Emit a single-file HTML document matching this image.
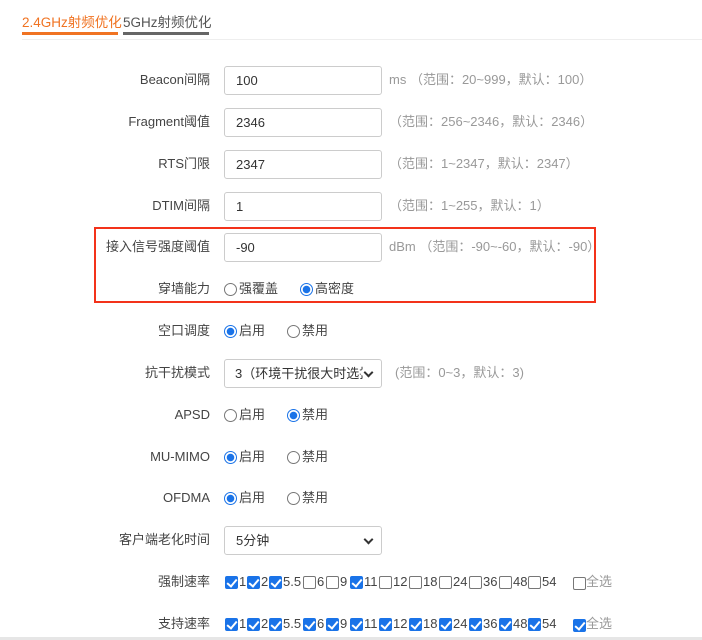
<!DOCTYPE html>
<html><head><meta charset="utf-8"><style>
*{box-sizing:border-box;margin:0;padding:0}
body{width:702px;height:640px;background:#fff;position:relative;overflow:hidden;font-family:"Liberation Sans","Noto Sans CJK SC",sans-serif;font-size:13px;color:#444}
.a{position:absolute;white-space:nowrap}
.lab{position:absolute;right:492px;white-space:nowrap;color:#444;line-height:16px}
.inp{position:absolute;left:224px;width:158px;height:29px;border:1px solid #ccc;border-radius:3px;padding-left:11px;line-height:27px;color:#333;overflow:hidden;white-space:nowrap}
.hint{position:absolute;color:#999;white-space:nowrap;line-height:16px}
.r{position:absolute;width:13px;height:13px;border:1px solid #777;border-radius:50%;background:#fff}
.r.on{border:1px solid #1a73e8;background:radial-gradient(circle,#1a73e8 0 3.5px,#fff 4px)}
.rt{position:absolute;line-height:16px}
.cb{position:absolute;width:13px;height:13px;border:1px solid #777;border-radius:2px;background:#fff}
.cb.on{background:#1a73e8;border-color:#1a73e8}
.cb.on::after{content:"";position:absolute;left:3px;top:0px;width:4px;height:8px;border:solid #fff;border-width:0 2px 2px 0;transform:rotate(40deg)}
.n{position:absolute;line-height:16px}
.sel{padding-right:22px}
.sel::after{content:"";position:absolute;right:9px;top:9px;width:5px;height:5px;border:solid #333;border-width:0 2px 2px 0;transform:rotate(45deg);background:#fff;box-shadow:0 0 0 3px #fff}
</style></head><body>
<div class="a" style="left:22px;top:14px;color:#f07322;font-size:13.5px;line-height:18px">2.4GHz射频优化</div>
<div class="a" style="left:22px;top:32px;width:96px;height:3px;background:#f07322"></div>
<div class="a" style="left:123px;top:14px;color:#555;font-size:13.5px;line-height:18px">5GHz射频优化</div>
<div class="a" style="left:123px;top:32px;width:86px;height:3px;background:#666"></div>
<div class="a" style="left:22px;top:39px;width:680px;height:1px;background:#eee"></div>

<div class="lab" style="top:72px">Beacon间隔</div><div class="inp" style="top:66px">100</div><div class="hint" style="left:389px;top:72px">ms （范围：20~999，默认：100）</div>
<div class="lab" style="top:114px">Fragment阈值</div><div class="inp" style="top:108px">2346</div><div class="hint" style="left:389px;top:114px">（范围：256~2346，默认：2346）</div>
<div class="lab" style="top:156px">RTS门限</div><div class="inp" style="top:150px">2347</div><div class="hint" style="left:389px;top:156px">（范围：1~2347，默认：2347）</div>
<div class="lab" style="top:198px">DTIM间隔</div><div class="inp" style="top:192px">1</div><div class="hint" style="left:389px;top:198px">（范围：1~255，默认：1）</div>

<div class="a" style="left:94px;top:227px;width:502px;height:76px;border:2px solid #f3321a"></div>
<div class="lab" style="top:239px">接入信号强度阈值</div><div class="inp" style="top:233px">-90</div><div class="hint" style="left:389px;top:239px">dBm （范围：-90~-60，默认：-90）</div>
<div class="lab" style="top:281px">穿墙能力</div><div class="r" style="left:224px;top:283px"></div><div class="rt" style="left:239px;top:281px">强覆盖</div><div class="r on" style="left:300px;top:283px"></div><div class="rt" style="left:315px;top:281px">高密度</div>

<div class="lab" style="top:323px">空口调度</div><div class="r on" style="left:224px;top:325px"></div><div class="rt" style="left:239px;top:323px">启用</div><div class="r" style="left:287px;top:325px"></div><div class="rt" style="left:302px;top:323px">禁用</div>

<div class="lab" style="top:365px">抗干扰模式</div><div class="inp sel" style="top:359px;padding-left:10px">3（环境干扰很大时选择</div><div class="hint" style="left:395px;top:365px">(范围：0~3，默认：3)</div>

<div class="lab" style="top:407px">APSD</div><div class="r" style="left:224px;top:409px"></div><div class="rt" style="left:239px;top:407px">启用</div><div class="r on" style="left:287px;top:409px"></div><div class="rt" style="left:302px;top:407px">禁用</div>
<div class="lab" style="top:449px">MU-MIMO</div><div class="r on" style="left:224px;top:451px"></div><div class="rt" style="left:239px;top:449px">启用</div><div class="r" style="left:287px;top:451px"></div><div class="rt" style="left:302px;top:449px">禁用</div>
<div class="lab" style="top:490px">OFDMA</div><div class="r on" style="left:224px;top:492px"></div><div class="rt" style="left:239px;top:490px">启用</div><div class="r" style="left:287px;top:492px"></div><div class="rt" style="left:302px;top:490px">禁用</div>

<div class="lab" style="top:532px">客户端老化时间</div><div class="inp sel" style="top:526px">5分钟</div>

<div class="lab" style="top:574px">强制速率</div>
<div class="lab" style="top:616px">支持速率</div>

<div class="cb on" style="left:225px;top:576px"></div><div class="n" style="left:239px;top:574px">1</div>
<div class="cb on" style="left:247px;top:576px"></div><div class="n" style="left:261px;top:574px">2</div>
<div class="cb on" style="left:269px;top:576px"></div><div class="n" style="left:283px;top:574px">5.5</div>
<div class="cb" style="left:303px;top:576px"></div><div class="n" style="left:317px;top:574px">6</div>
<div class="cb" style="left:326px;top:576px"></div><div class="n" style="left:340px;top:574px">9</div>
<div class="cb on" style="left:350px;top:576px"></div><div class="n" style="left:364px;top:574px">11</div>
<div class="cb" style="left:379px;top:576px"></div><div class="n" style="left:393px;top:574px">12</div>
<div class="cb" style="left:409px;top:576px"></div><div class="n" style="left:423px;top:574px">18</div>
<div class="cb" style="left:439px;top:576px"></div><div class="n" style="left:453px;top:574px">24</div>
<div class="cb" style="left:469px;top:576px"></div><div class="n" style="left:483px;top:574px">36</div>
<div class="cb" style="left:499px;top:576px"></div><div class="n" style="left:513px;top:574px">48</div>
<div class="cb" style="left:528px;top:576px"></div><div class="n" style="left:542px;top:574px">54</div>
<div class="cb" style="left:573px;top:577px"></div><div class="n" style="left:586px;top:574px;color:#999">全选</div>

<div class="cb on" style="left:225px;top:618px"></div><div class="n" style="left:239px;top:616px">1</div>
<div class="cb on" style="left:247px;top:618px"></div><div class="n" style="left:261px;top:616px">2</div>
<div class="cb on" style="left:269px;top:618px"></div><div class="n" style="left:283px;top:616px">5.5</div>
<div class="cb on" style="left:303px;top:618px"></div><div class="n" style="left:317px;top:616px">6</div>
<div class="cb on" style="left:326px;top:618px"></div><div class="n" style="left:340px;top:616px">9</div>
<div class="cb on" style="left:350px;top:618px"></div><div class="n" style="left:364px;top:616px">11</div>
<div class="cb on" style="left:379px;top:618px"></div><div class="n" style="left:393px;top:616px">12</div>
<div class="cb on" style="left:409px;top:618px"></div><div class="n" style="left:423px;top:616px">18</div>
<div class="cb on" style="left:439px;top:618px"></div><div class="n" style="left:453px;top:616px">24</div>
<div class="cb on" style="left:469px;top:618px"></div><div class="n" style="left:483px;top:616px">36</div>
<div class="cb on" style="left:499px;top:618px"></div><div class="n" style="left:513px;top:616px">48</div>
<div class="cb on" style="left:528px;top:618px"></div><div class="n" style="left:542px;top:616px">54</div>
<div class="cb on" style="left:573px;top:619px"></div><div class="n" style="left:586px;top:616px;color:#999">全选</div>

<div class="a" style="left:0;top:637px;width:702px;height:3px;background:#e6e6e6"></div>
</body></html>
